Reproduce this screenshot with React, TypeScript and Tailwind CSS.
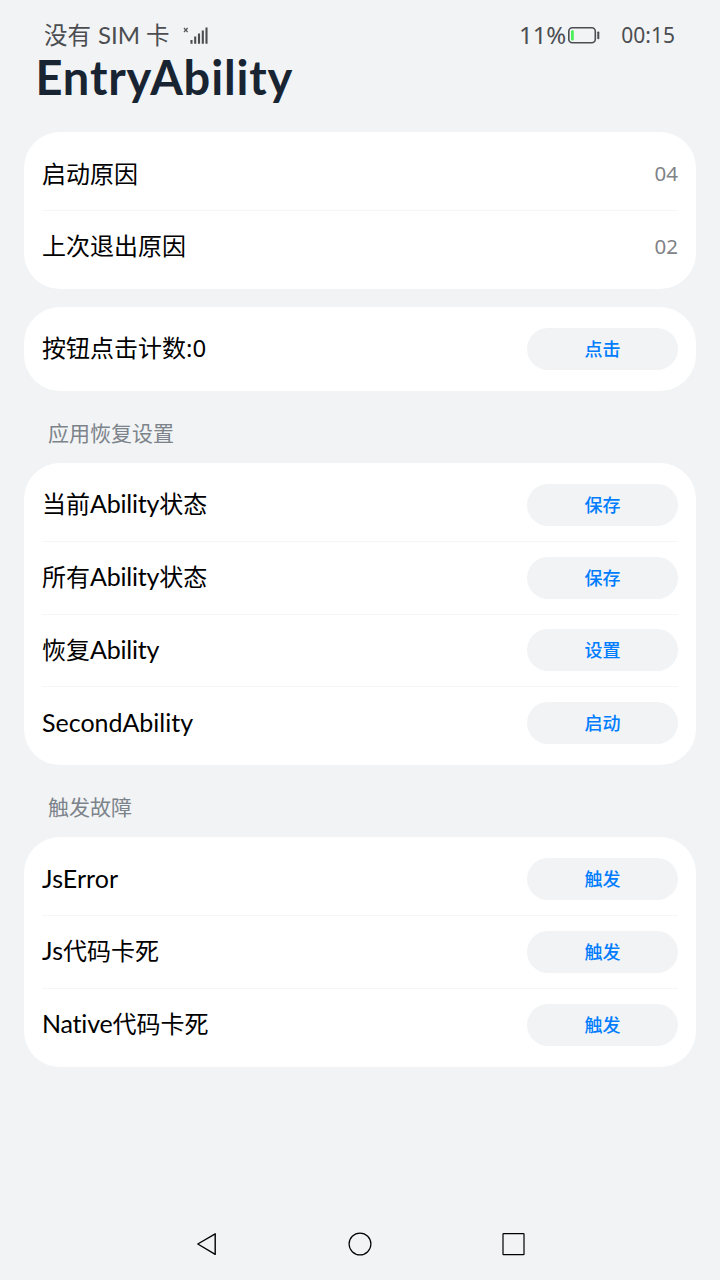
import { Fragment, type ReactNode } from "react";

type Part = { text: string; className?: string };
type RowData = { label: Part[]; value?: string; action?: string };

const cjk = "font-['Noto_Sans_CJK_SC',sans-serif]";
const digits = "font-['Noto_Sans','Noto_Sans_CJK_SC',sans-serif]";
const latin = "font-['Lato','Noto_Sans_CJK_SC',sans-serif]";

function Row({ label, value, action }: RowData) {
  return (
    <div className="flex h-[72px] items-center justify-between">
      <div className="flex items-baseline pb-[3px] text-[24px] leading-9 whitespace-pre text-black">
        {label.map((part) => (
          <span key={part.text} className={part.className ?? cjk}>
            {part.text}
          </span>
        ))}
      </div>
      {value && <span className={`${digits} pb-[2px] text-[20.5px] leading-7 text-[#7f8287]`}>{value}</span>}
      {action && (
        <button className={`${cjk} h-[42px] w-[151px] rounded-full bg-[#f1f3f5] pb-[2px] text-[18px] leading-none font-medium text-[#007dff]`}>
          {action}
        </button>
      )}
    </div>
  );
}

function Card({ rows }: { rows: RowData[] }) {
  return (
    <section className="rounded-[36px] bg-white px-[18px] py-[6px]">
      {rows.map((row, i) => (
        <Fragment key={i}>
          {i > 0 && <div className="h-[0.75px] bg-[#f6f6f6]" />}
          <Row {...row} />
        </Fragment>
      ))}
    </section>
  );
}

function Heading({ children }: { children: ReactNode }) {
  return (
    <h2 className={`${cjk} flex h-[72px] items-center pt-[10px] pl-[24px] text-[21px] leading-8 font-normal text-[#7c838a]`}>
      {children}
    </h2>
  );
}

const ability = `${latin} text-[25px] tracking-[-0.2px]`;
const fault = `${latin} text-[25px] tracking-[0.1px]`;

export default function App() {
  return (
    <div className="flex h-[1280px] w-[720px] flex-col overflow-hidden bg-[#f1f3f5]">
      <header className="flex h-[50px] items-center justify-between pt-[20px] pr-[45px] pl-[44px] text-[#4b4d50]">
        <div className="flex items-center">
          <span className={`${cjk} flex items-baseline pb-[1px] text-[23.5px] leading-[30px] whitespace-pre`}>
            没有<span className={`${latin} mr-[6px] ml-[7px] text-[24px]`}>SIM</span>卡
          </span>
          <svg className="ml-[12px] h-[20px] w-[28px]" viewBox="0 0 28 20" fill="none">
            <path d="M2 3l3.6 4M5.6 3L2 7" stroke="#55575a" strokeWidth="1.2" />
            <path d="M9.5 16v1.7M13.2 12.5v5.2M17 9.5v8.2M20.8 6.5v11.2M24.5 3.5v14.2" stroke="#4b4d50" strokeWidth="2.1" strokeLinecap="square" />
          </svg>
        </div>
        <div className={`${digits} flex items-center`}>
          <span className="text-[24px] leading-[30px]">11%</span>
          <svg className="mr-[20px] ml-[1px] h-[20px] w-[34px]" viewBox="0 0 34 20" fill="none">
            <rect x="1.8" y="2.8" width="26.5" height="15" rx="3.5" stroke="#4b4d50" strokeWidth="1.6" />
            <rect x="4" y="5.2" width="2.8" height="10.4" rx="1" fill="#4cf05a" />
            <rect x="30.3" y="6.5" width="2" height="7.8" rx="0.8" fill="#4b4d50" />
          </svg>
          <span className="text-[21px] leading-[30px]">00:15</span>
        </div>
      </header>
      <h1 className={`${latin} h-[82px] pt-[3px] pl-[35.5px] text-[47px] leading-[48px] font-bold tracking-[0.85px] text-[#182431]`}>EntryAbility</h1>
      <main className="flex flex-col px-6">
        <Card rows={[{ label: [{ text: "启动原因" }], value: "04" }, { label: [{ text: "上次退出原因" }], value: "02" }]} />
        <div className="h-[18px]" />
        <Card rows={[{ label: [{ text: "按钮点击计数" }, { text: ":0", className: digits }], action: "点击" }]} />
        <Heading>应用恢复设置</Heading>
        <Card
          rows={[
            { label: [{ text: "当前" }, { text: "Ability", className: ability }, { text: "状态" }], action: "保存" },
            { label: [{ text: "所有" }, { text: "Ability", className: ability }, { text: "状态" }], action: "保存" },
            { label: [{ text: "恢复" }, { text: "Ability", className: ability }], action: "设置" },
            { label: [{ text: "SecondAbility", className: `${latin} text-[25px]` }], action: "启动" },
          ]}
        />
        <Heading>触发故障</Heading>
        <Card
          rows={[
            { label: [{ text: "JsError", className: fault }], action: "触发" },
            { label: [{ text: "Js", className: fault }, { text: "代码卡死" }], action: "触发" },
            { label: [{ text: "Native", className: ability }, { text: "代码卡死" }], action: "触发" },
          ]}
        />
      </main>
      <nav className="mt-auto flex h-[72px] items-center justify-between px-[194px]">
        <svg className="h-[26px] w-[26px]" viewBox="0 0 26 26" fill="none" stroke="#000" strokeWidth="1.4" strokeLinejoin="round">
          <path d="M3.8 13L21.2 2.8v20.6z" />
        </svg>
        <svg className="h-[26px] w-[26px]" viewBox="0 0 26 26" fill="none" stroke="#000" strokeWidth="1.2">
          <circle cx="13" cy="13" r="10.9" />
        </svg>
        <svg className="h-[26px] w-[26px]" viewBox="0 0 26 26" fill="none" stroke="#000" strokeWidth="1.2">
          <rect x="3" y="2.7" width="21" height="21" rx="0.5" />
        </svg>
      </nav>
    </div>
  );
}
